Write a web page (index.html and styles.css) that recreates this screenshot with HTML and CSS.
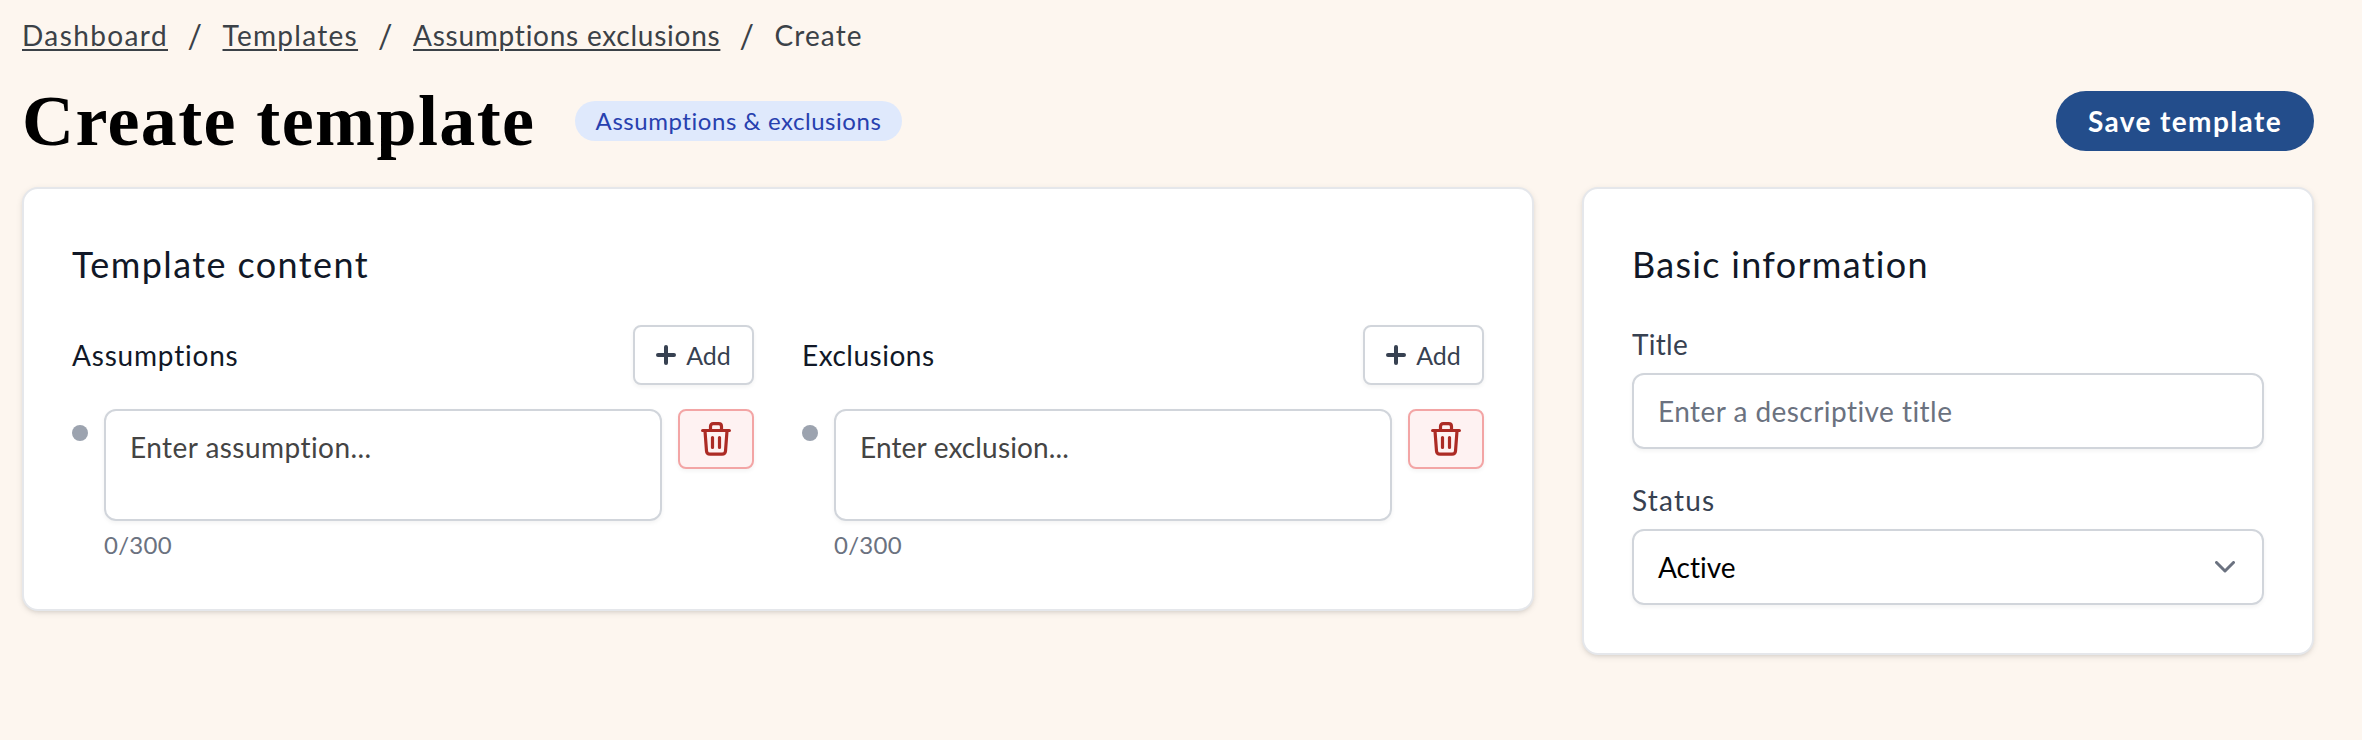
FILE: index.html
```html
<!DOCTYPE html>
<html lang="en">
<head>
<meta charset="utf-8">
<title>Create template</title>
<link rel="stylesheet" href="styles.css">
</head>
<body>
<svg class="sprite" aria-hidden="true">
  <symbol id="plus" viewBox="0 0 20 20"><path d="M10 2v16M2 10h16" fill="none" stroke="currentColor" stroke-width="4" stroke-linecap="round"/></symbol>
  <symbol id="trash" viewBox="0 0 30 34"><g fill="none" stroke="currentColor" stroke-width="3.200" stroke-linecap="round" stroke-linejoin="round"><path d="M1.600 8.500h26.800M9.500 8V4.500Q9.500 1.700 12.300 1.700h5.400Q20.500 1.700 20.500 4.500V8M4 9l1.500 20Q5.700 32.200 9 32.200h12q3.300 0 3.500-3.200L26 9M11.500 15.500v10M18.500 15.500v10"/></g></symbol>
  <symbol id="chevron" viewBox="0 0 20 12"><path d="M1.500 1.500 10 10l8.500-8.500" fill="none" stroke="currentColor" stroke-width="3" stroke-linecap="round" stroke-linejoin="round"/></symbol>
</svg>
<main class="page">
  <nav class="breadcrumb">
    <a class="crumb crumb-dashboard" href="#">Dashboard</a><span class="slash">/</span>
    <a class="crumb crumb-templates" href="#">Templates</a><span class="slash">/</span>
    <a class="crumb crumb-section" href="#">Assumptions exclusions</a><span class="slash">/</span>
    <span class="crumb-current">Create</span>
  </nav>
  <header class="header">
    <h1 class="title">Create template</h1>
    <span class="badge"><span class="badge-text">Assumptions &amp; exclusions</span></span>
    <button class="save"><span class="save-text">Save template</span></button>
  </header>
  <div class="layout">
    <section class="card content">
      <h2 class="card-title content-title">Template content</h2>
      <div class="columns">
        <div class="column">
          <div class="column-head">
            <h3 class="column-title assumptions-title">Assumptions</h3>
            <button class="add"><svg class="plus"><use href="#plus"/></svg><span class="add-text">Add</span></button>
          </div>
          <div class="item">
            <span class="dot"></span>
            <div class="entry"><div class="textarea"><span class="assumption-hint">Enter assumption...</span></div><span class="counter">0/300</span></div>
            <button class="delete" aria-label="Delete"><svg class="trash"><use href="#trash"/></svg></button>
          </div>
        </div>
        <div class="column">
          <div class="column-head">
            <h3 class="column-title exclusions-title">Exclusions</h3>
            <button class="add"><svg class="plus"><use href="#plus"/></svg><span class="add-text">Add</span></button>
          </div>
          <div class="item">
            <span class="dot"></span>
            <div class="entry"><div class="textarea"><span class="exclusion-hint">Enter exclusion...</span></div><span class="counter">0/300</span></div>
            <button class="delete" aria-label="Delete"><svg class="trash"><use href="#trash"/></svg></button>
          </div>
        </div>
      </div>
    </section>
    <section class="card info">
      <h2 class="card-title info-title">Basic information</h2>
      <div class="field">
        <span class="label label-title">Title</span>
        <div class="control"><span class="title-hint">Enter a descriptive title</span></div>
      </div>
      <div class="field">
        <span class="label label-status">Status</span>
        <div class="control select"><span class="status-value">Active</span><svg class="chevron"><use href="#chevron"/></svg></div>
      </div>
    </section>
  </div>
</main>
</body>
</html>
```
FILE: styles.css
```css
* { box-sizing: border-box; }
body { margin: 0; background: #fdf6ef; font: 400 28px/40px Lato, sans-serif; font-variant-ligatures: none; color: #111827; }
h1, h2, h3 { margin: 0; font-weight: 400; }
button { font: inherit; border: 0; padding: 0; display: flex; align-items: center; justify-content: center; }
span, a { white-space: nowrap; }
.sprite { display: none; }
.page { min-height: 740px; padding: 16px 48px 0 22px; }

.breadcrumb { display: flex; height: 40px; line-height: 39px; color: #3b4147; }
.crumb { color: inherit; text-decoration: underline; text-decoration-thickness: 2px; text-underline-offset: 3px; }
.crumb-dashboard { width: 145px; letter-spacing: 1.4px; }
.crumb-templates { width: 135px; letter-spacing: 1.3px; }
.crumb-section { width: 306px; letter-spacing: .75px; }
.crumb-current { letter-spacing: 1.1px; }
.slash { width: 55.500px; font-size: 32px; text-align: center; }

.header { display: flex; align-items: center; height: 96px; margin-top: 17px; margin-bottom: 18px; }
.title { width: 553px; font: 700 72px/92px "Liberation Serif", serif; letter-spacing: 1.4px; color: #000; white-space: nowrap; }
.badge { width: 327px; height: 40px; border-radius: 20px; background: #dfe9fc; color: #2740af; font-size: 24px; letter-spacing: .55px; text-align: center; }
.save { width: 258px; height: 60px; margin-left: auto; border-radius: 30px; background: #234d8b; color: #fff; font-weight: 700; letter-spacing: 1.4px; }

.layout { display: grid; grid-template-columns: 1512px 732px; gap: 48px; align-items: start; }
.card { padding: 48px; border: 2px solid #e5e7eb; border-radius: 16px; background: #fff; box-shadow: 0 2px 6px rgba(0,0,0,.1), 0 2px 4px -2px rgba(0,0,0,.1); }
.content { height: 424px; }
.info { height: 468px; }
.card-title { height: 56px; font-size: 36px; line-height: 55px; white-space: nowrap; }
.content-title { letter-spacing: 1.4px; }
.info-title { letter-spacing: 1.3px; }
.columns { display: grid; grid-template-columns: 1fr 1fr; gap: 48px; margin-top: 32px; }
.column-head { display: flex; align-items: center; justify-content: space-between; height: 60px; margin-bottom: 24px; }
.column-title { font-size: 28px; }
.assumptions-title { letter-spacing: .8px; }
.exclusions-title { letter-spacing: .5px; }
.add { width: 121px; height: 60px; gap: 10px; border: 2px solid #d1d5db; border-radius: 8px; background: #fff; color: #374151; font-size: 25px; box-shadow: 0 2px 4px rgba(0,0,0,.05); }
.plus { width: 20px; height: 20px; }
.item { display: flex; align-items: flex-start; gap: 16px; }
.dot { width: 16px; height: 16px; margin-top: 16px; border-radius: 50%; background: #9ca3af; }
.entry { width: 558px; }
.textarea { height: 112px; padding: 16px 24px; border: 2px solid #d1d5db; border-radius: 12px; color: #444; box-shadow: 0 2px 4px rgba(0,0,0,.05); }
.assumption-hint { letter-spacing: .45px; }
.exclusion-hint { letter-spacing: .15px; }
.counter { display: block; margin-top: 4px; font-size: 24px; letter-spacing: .3px; color: #6b7280; }
.delete { width: 76px; height: 60px; border: 2px solid #f3a5a5; border-radius: 8px; background: #fef2f2; color: #ac2b25; box-shadow: 0 2px 4px rgba(0,0,0,.05); }
.trash { width: 30px; height: 34px; }

.field { margin-top: 24px; }
.label { display: block; height: 56px; line-height: 55px; color: #374151; }
.label-title { letter-spacing: .3px; }
.label-status { letter-spacing: 1.2px; }
.control { display: flex; align-items: center; height: 76px; padding: 0 24px; border: 2px solid #d1d5db; border-radius: 12px; color: #6b7280; box-shadow: 0 2px 4px rgba(0,0,0,.05); }
.title-hint { letter-spacing: .45px; }
.select { justify-content: space-between; color: #000; }
.chevron { width: 20px; height: 12px; margin-right: 3px; color: #6b7280; }
```
